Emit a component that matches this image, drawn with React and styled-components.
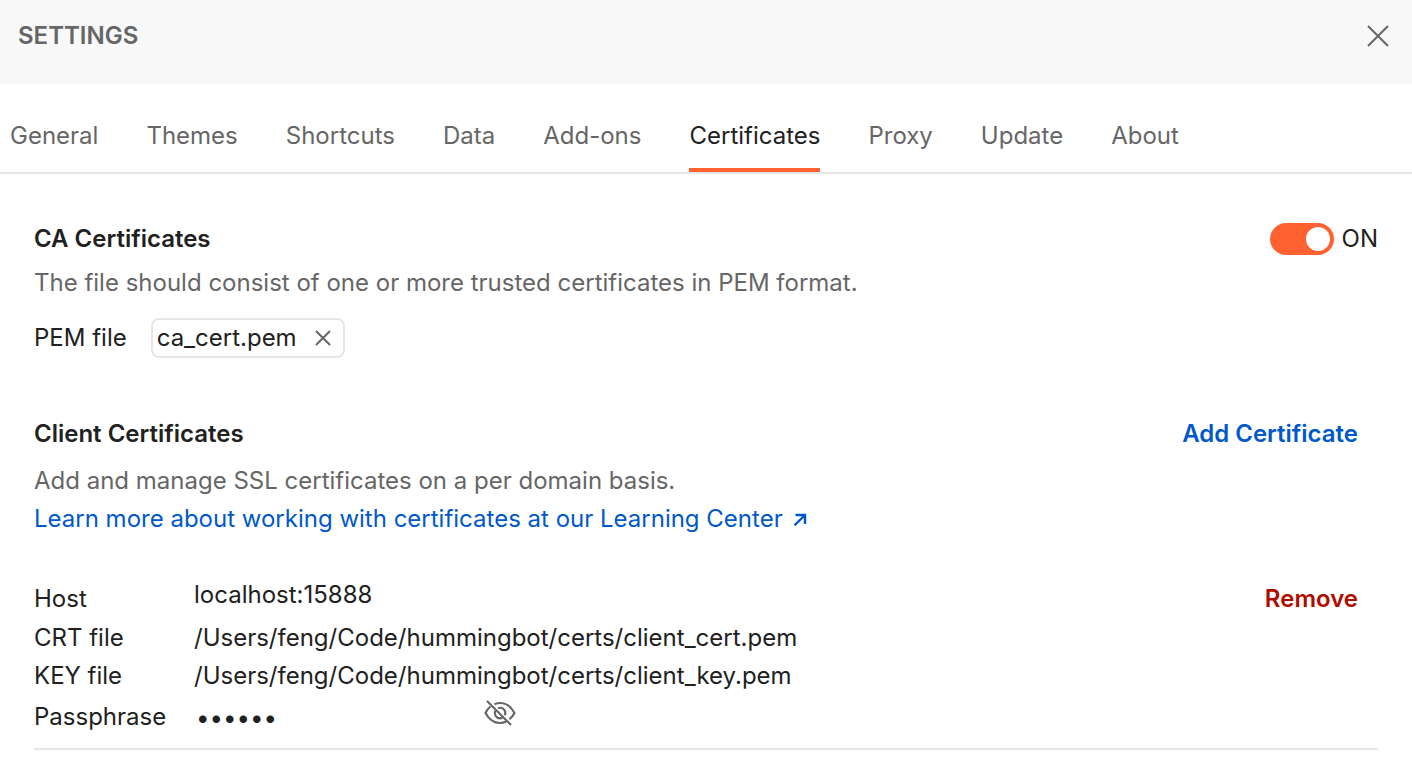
import React, { useState } from "react";
import styled, { createGlobalStyle } from "styled-components";

const GlobalStyle = createGlobalStyle`
  *, *::before, *::after { box-sizing: border-box; }
  body {
    margin: 0;
    background: #ffffff;
    color: #212121;
    font-family: Inter, "Liberation Sans", sans-serif;
    font-size: 24px;
    line-height: 38px;
  }
  button, input { font: inherit; color: inherit; }
  h1, h2, p, dl, dd, dt { margin: 0; font-size: inherit; }
`;

const Header = styled.header`
  display: flex;
  align-items: flex-start;
  justify-content: space-between;
  height: 84px;
  padding: 17px 15px 0 18px;
  background: #f8f8f8;
`;

const Title = styled.h1`
  font-weight: 600;
  color: #666666;
`;

const IconButton = styled.button`
  display: flex;
  align-items: center;
  justify-content: center;
  width: ${(p) => p.$size}px;
  height: ${(p) => p.$size}px;
  padding: 0;
  border: 0;
  background: none;
  color: #666666;
  cursor: pointer;
`;

const Tabs = styled.nav`
  display: flex;
  gap: 48px;
  padding: 32px 10px 0;
  border-bottom: 2px solid #e6e6e6;
`;

const Tab = styled.button`
  height: 56px;
  padding: 0 0 12px;
  border: 0;
  border-bottom: 4px solid ${(p) => (p.$active ? "#ff6230" : "transparent")};
  background: none;
  color: ${(p) => (p.$active ? "#212121" : "#666666")};
  cursor: pointer;
`;

const Content = styled.main`
  padding: 46px 34px 0;
`;

const Section = styled.section`
  margin-bottom: ${(p) => p.$gap}px;
`;

const SectionHead = styled.div`
  display: flex;
  align-items: center;
  justify-content: space-between;
`;

const Heading = styled.h2`
  font-weight: 600;
`;

const Toggle = styled.label`
  display: flex;
  align-items: center;
  gap: 8px;
  cursor: pointer;
`;

const Switch = styled.input`
  appearance: none;
  display: flex;
  align-items: center;
  justify-content: ${(p) => (p.checked ? "flex-end" : "flex-start")};
  width: 64px;
  height: 32px;
  margin: 0;
  padding: 4px;
  border-radius: 16px;
  background: ${(p) => (p.checked ? "#ff6230" : "#a6a6a6")};
  cursor: pointer;

  &::before {
    content: "";
    width: 24px;
    height: 24px;
    border-radius: 50%;
    background: #ffffff;
  }
`;

const Description = styled.p`
  margin-top: ${(p) => p.$gap}px;
  color: #666666;
`;

const FileRow = styled.div`
  display: flex;
  align-items: center;
  gap: 24px;
  margin-top: 16px;
`;

const FileChip = styled.div`
  display: flex;
  align-items: center;
  gap: 10px;
  height: 40px;
  padding: 0 4px;
  border: 2px solid #e6e6e6;
  border-radius: 8px;
`;

const LearnLink = styled.a`
  display: inline-flex;
  align-items: center;
  gap: 10px;
  color: #0059cc;
  text-decoration: none;
`;

const TextButton = styled.button`
  padding: 0;
  border: 0;
  margin-right: 20px;
  background: none;
  font-weight: 600;
  color: ${(p) => (p.$danger ? "#b10b00" : "#0059cc")};
  cursor: pointer;
`;

const Certificate = styled.article`
  display: flex;
  align-items: flex-start;
  justify-content: space-between;
  padding-bottom: 9px;
  border-bottom: 2px solid #e6e6e6;
`;

const Row = styled.div`
  display: grid;
  grid-template-columns: 160px 1fr;
  align-items: ${(p) => (p.$top ? "start" : "center")};
  min-height: ${(p) => (p.$top ? 39 : 38)}px;
`;

const HostValue = styled.dd`
  line-height: 30px;
`;

const SecretValue = styled.dd`
  display: flex;
  align-items: flex-start;
`;

const Secret = styled.input`
  width: 288px;
  height: 44px;
  padding: 0 0 0 2px;
  border: 0;
  outline: 0;
  background: none;
`;

const tabs = ["General", "Themes", "Shortcuts", "Data", "Add-ons", "Certificates", "Proxy", "Update", "About"];

const Cross = ({ size }) => (
  <svg width={size} height={size} viewBox={`0 0 ${size} ${size}`} fill="none" stroke="currentColor" strokeWidth="2" aria-hidden="true">
    <path d={`M1 1L${size - 1} ${size - 1}M${size - 1} 1L1 ${size - 1}`} />
  </svg>
);

const ArrowUpRight = () => (
  <svg width="14" height="14" viewBox="0 0 14 14" fill="none" stroke="currentColor" strokeWidth="2.4" aria-hidden="true">
    <path d="M2.500 3H12V12M12 3L1.500 13.300" />
  </svg>
);

const EyeOff = () => (
  <svg width="32" height="28" viewBox="0 0 32 28" fill="none" stroke="currentColor" strokeWidth="2.2" aria-hidden="true">
    <path d="M3 2L27 26" />
    <path d="M10.500 5.200C12.200 4.500 14 4 16 4C22.500 4 27.500 8.500 30.500 14C29.300 16.300 27.600 18.500 25.500 20.200" />
    <path d="M6.500 7.500C4.300 9.200 2.700 11.500 1.500 14C4.500 19.500 9.500 24 16 24C18.300 24 20.300 23.500 22.200 22.600" />
    <path d="M14 9.200C17.800 7.700 21.300 10.400 21.300 14C21.300 14.900 21.100 15.600 20.800 16.300" />
    <path d="M11.200 11.800C9.600 15.500 12.200 19.300 16 19.300C16.900 19.300 17.700 19.100 18.400 18.700" />
  </svg>
);

export default function App() {
  const [active, setActive] = useState("Certificates");
  const [enabled, setEnabled] = useState(true);
  const [visible, setVisible] = useState(false);

  return (
    <>
      <GlobalStyle />
      <Header>
        <Title>SETTINGS</Title>
        <IconButton $size={38} aria-label="Close settings">
          <Cross size={22} />
        </IconButton>
      </Header>
      <Tabs>
        {tabs.map((name) => (
          <Tab key={name} $active={name === active} onClick={() => setActive(name)}>
            {name}
          </Tab>
        ))}
      </Tabs>
      <Content>
        <Section $gap={57}>
          <SectionHead>
            <Heading>CA Certificates</Heading>
            <Toggle>
              <Switch type="checkbox" checked={enabled} onChange={() => setEnabled(!enabled)} />
              {enabled ? "ON" : "OFF"}
            </Toggle>
          </SectionHead>
          <Description $gap={6}>
            The file should consist of one or more trusted certificates in PEM format.
          </Description>
          <FileRow>
            <span>PEM file</span>
            <FileChip>
              ca_cert.pem
              <IconButton $size={32} aria-label="Remove ca_cert.pem">
                <Cross size={16} />
              </IconButton>
            </FileChip>
          </FileRow>
        </Section>
        <Section $gap={42}>
          <SectionHead>
            <Heading>Client Certificates</Heading>
            <TextButton>Add Certificate</TextButton>
          </SectionHead>
          <Description $gap={9}>Add and manage SSL certificates on a per domain basis.</Description>
          <LearnLink href="#learning-center">
            Learn more about working with certificates at our Learning Center
            <ArrowUpRight />
          </LearnLink>
        </Section>
        <Certificate>
          <dl>
            <Row $top>
              <dt>Host</dt>
              <HostValue>localhost:15888</HostValue>
            </Row>
            <Row>
              <dt>CRT file</dt>
              <dd>/Users/feng/Code/hummingbot/certs/client_cert.pem</dd>
            </Row>
            <Row>
              <dt>KEY file</dt>
              <dd>/Users/feng/Code/hummingbot/certs/client_key.pem</dd>
            </Row>
            <Row>
              <dt>
                <label htmlFor="passphrase">Passphrase</label>
              </dt>
              <SecretValue>
                <Secret id="passphrase" type={visible ? "text" : "password"} value="secret" readOnly />
                <IconButton $size={36} aria-label="Show passphrase" onClick={() => setVisible(!visible)}>
                  <EyeOff />
                </IconButton>
              </SecretValue>
            </Row>
          </dl>
          <TextButton $danger>Remove</TextButton>
        </Certificate>
      </Content>
    </>
  );
}
